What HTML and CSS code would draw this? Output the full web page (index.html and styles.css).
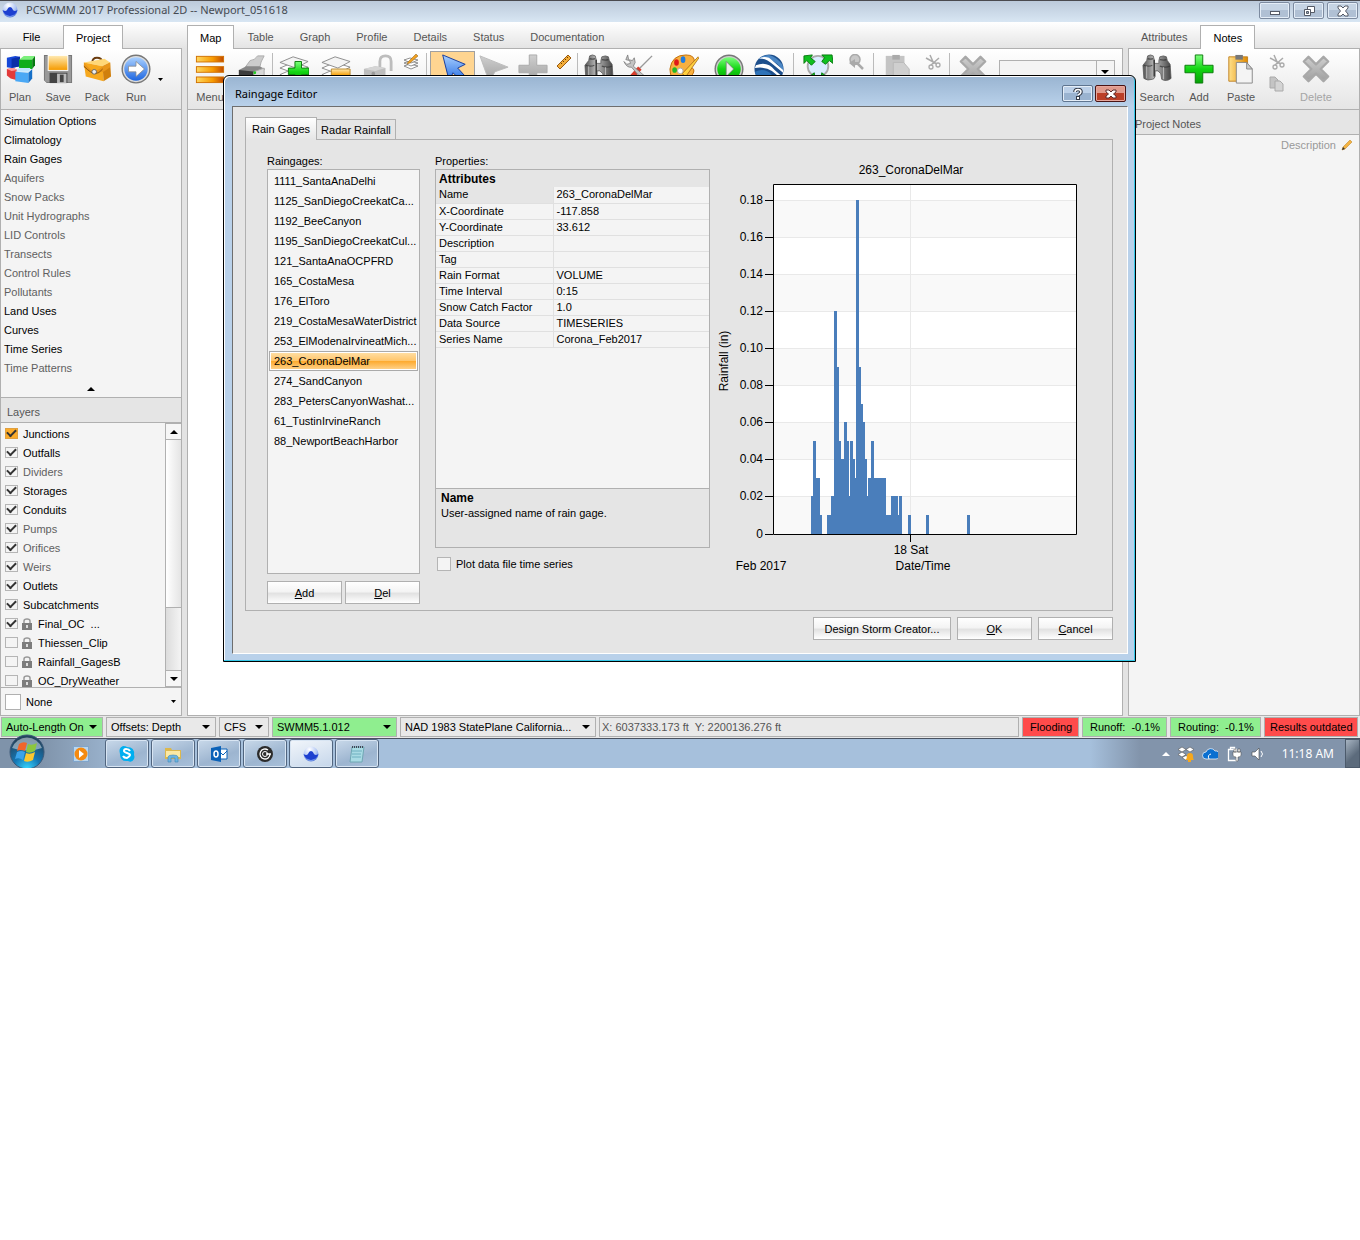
FILE: index.html
```html
<!DOCTYPE html>
<html lang="en">
<head>
<meta charset="utf-8">
<title>PCSWMM 2017 Professional 2D -- Newport_051618</title>
<link rel="stylesheet" href="styles.css">
</head>
<body>
<svg class="defs" width="0" height="0" aria-hidden="true">
  <defs>
    <linearGradient id="gold" x1="0" y1="0" x2="0" y2="1"><stop offset="0" stop-color="#ffe9b0"/><stop offset="1" stop-color="#f59b00"/></linearGradient>
    <linearGradient id="goldH" x1="0" y1="0" x2="1" y2="0"><stop offset="0" stop-color="#ffe08a"/><stop offset="1" stop-color="#e08a00"/></linearGradient>
    <linearGradient id="menubar" x1="0" y1="0" x2="1" y2="0"><stop offset="0" stop-color="#ffd860"/><stop offset=".6" stop-color="#f79a00"/><stop offset="1" stop-color="#c24a00"/></linearGradient>
    <linearGradient id="green" x1="0" y1="0" x2="0" y2="1"><stop offset="0" stop-color="#7dff7d"/><stop offset=".5" stop-color="#12d512"/><stop offset="1" stop-color="#07a007"/></linearGradient>
    <linearGradient id="steel" x1="0" y1="0" x2="1" y2="0"><stop offset="0" stop-color="#555"/><stop offset=".4" stop-color="#bbb"/><stop offset="1" stop-color="#444"/></linearGradient>
    <linearGradient id="grey" x1="0" y1="0" x2="0" y2="1"><stop offset="0" stop-color="#cfcfcf"/><stop offset="1" stop-color="#9e9e9e"/></linearGradient>
    <linearGradient id="blue" x1="0" y1="0" x2="0" y2="1"><stop offset="0" stop-color="#a9d0ff"/><stop offset="1" stop-color="#1e66e0"/></linearGradient>
    <radialGradient id="ball" cx=".4" cy=".2" r=".8"><stop offset="0" stop-color="#fff"/><stop offset=".6" stop-color="#b4c8f5"/><stop offset="1" stop-color="#5b80dd"/></radialGradient>
    <radialGradient id="orb" cx=".5" cy="1" r=".9"><stop offset="0" stop-color="#38d8ff"/><stop offset=".45" stop-color="#1577b5"/><stop offset="1" stop-color="#23445e"/></radialGradient>
    <symbol id="i-ball" viewBox="0 0 16 16"><circle cx="8" cy="8" r="7.500" fill="url(#ball)"/><path d="M.6 8q3 2 4.400 0Q6 5 8 5t3 3q1.500 2 4.400 0a7.500 7.500 0 0 1-14.800 0z" fill="#1d3fd0"/><path d="M3 12q5 4 10 0-5 5-10 0z" fill="#8fb0ff"/></symbol>
    <symbol id="i-plan" viewBox="0 0 32 32"><path d="M2 4l9-2 5 1v10l-9 2-5-1z" fill="#1648d8"/><path d="M7 5l9-2v10l-9 2z" fill="#0a2fa8"/><path d="M15 6l5-4h12l-3 4z" fill="#7bf07b"/><path d="M15 6h14v10H15z" fill="#0fae1c"/><path d="M29 6l3-4v10l-3 4z" fill="#067a10"/><path d="M2 16l7-1 4 2v11l-7-2-4-3z" fill="#e23a3a"/><path d="M2 16l7-1 4 2-6 1z" fill="#ff9d9d"/><path d="M11 19l4-4h12l-1 4z" fill="#bfe6ff"/><path d="M11 19l14 1v11l-14-2z" fill="#4aa8f5"/><path d="M25 20l4-4v10l-4 5z" fill="#1670c8"/></symbol>
    <symbol id="i-save" viewBox="0 0 32 32"><path d="M1 1h30v30H4l-3-3z" fill="#777"/><path d="M2 2h28v28H4l-2-2z" fill="#999"/><path d="M5 1h22v17H5z" fill="#fff"/><path d="M6 2h20v15H6z" fill="url(#gold)"/><path d="M7 20h19v11H7z" fill="#444"/><path d="M15 21h10v10H15z" fill="#bbb"/><path d="M18 22h4v8h-4z" fill="#444"/></symbol>
    <symbol id="i-pack" viewBox="0 0 32 32"><path d="M11 9q0-5 5-5t6 5" fill="none" stroke="#6a3c10" stroke-width="2"/><path d="M2 9l22-4 6 4-8 4z" fill="#ffd777"/><path d="M2 9l20 4 1 16-19-5z" fill="#f6a81e"/><path d="M22 13l8-4 1 15-8 5z" fill="#d07f0c"/><path d="M2 9q8 10 12 9t8-5l8-4v5l-7 5-10 1Q7 19 2 14z" fill="#e8951a"/><path d="M2 13q8 8 12 8t8-5" fill="none" stroke="#8a5208"/><circle cx="13" cy="19" r="2.500" fill="#eee" stroke="#666"/></symbol>
    <symbol id="i-run" viewBox="0 0 32 32"><circle cx="16" cy="16" r="15.500" fill="#777"/><circle cx="16" cy="16" r="14" fill="#ddd"/><circle cx="16" cy="16" r="12.500" fill="url(#blue)"/><path d="M8 13h8V8l9 8-9 8v-5H8z" fill="#fff" stroke="#888" stroke-width=".8"/></symbol>
    <symbol id="i-menu" viewBox="0 0 32 32"><g fill="url(#menubar)" stroke="#d07000"><rect x="1.500" y="2.500" width="29" height="6"/><rect x="1.500" y="13.500" width="29" height="6"/><rect x="1.500" y="24.500" width="29" height="6"/></g></symbol>
    <symbol id="i-print" viewBox="0 0 32 32"><path d="M10 14l5-7q5 0 8-5h7q-4 6-5 14z" fill="#ccc" stroke="#aaa"/><path d="M3 17l8-4h14l6 3-4 4H6z" fill="#888"/><path d="M3 17l18 2v10L3 27z" fill="#3c3c3c"/><path d="M19 19l11-4v9l-11 5z" fill="#d8d8d8" stroke="#aaa"/><circle cx="20" cy="20" r="1.500" fill="#2c2"/></symbol>
    <symbol id="i-stack" viewBox="0 0 32 32"><g fill="#fff" stroke="#8a8a8a"><path d="M1 22l14-6 16 5-13 7z"/><path d="M1 15l14-6 16 5-13 7z"/><path d="M1 9l14-6 16 5-13 7z" fill="#f4f4f4"/></g></symbol>
    <symbol id="i-plus" viewBox="0 0 32 32"><path d="M12 1h8v11h11v8H20v11h-8V20H1v-8h11z" fill="url(#green)" stroke="#0a7a0a"/></symbol>
    <symbol id="i-plusg" viewBox="0 0 32 32"><path d="M12 1h8v11h11v8H20v11h-8V20H1v-8h11z" fill="url(#grey)" stroke="#aaa"/></symbol>
    <symbol id="i-layeradd" viewBox="0 0 32 32"><use href="#i-stack"/><path d="M17 8h7v7h8v7h-8v8h-7v-8h-7v-7h7z" fill="url(#green)" stroke="#0a7a0a"/></symbol>
    <symbol id="i-layer" viewBox="0 0 32 32"><use href="#i-stack"/><path d="M11 16h20v7H11z" fill="url(#gold)" stroke="#b8862a"/></symbol>
    <symbol id="i-unlock" viewBox="0 0 32 32"><path d="M18 15V8q0-6 6-6t6 6v10" fill="none" stroke="#bdbdbd" stroke-width="3"/><path d="M1 16l12-3 11 2v14H1z" fill="#bdbdbd"/><path d="M1 16l12-3 11 2-11 3z" fill="#d5d5d5"/><circle cx="11" cy="21" r="2" fill="#999"/></symbol>
    <symbol id="i-layeredit" viewBox="0 0 16 16"><g fill="#fff" stroke="#777" stroke-width=".8"><path d="M1 12l6-2 8 2-7 3z"/><path d="M1 9l6-2 8 2-7 3z"/><path d="M1 6l6-2 8 2-7 3z"/></g><path d="M5 8l8-8 2 2-8 7-3 1z" fill="#f0a020" stroke="#8a5a10" stroke-width=".5"/></symbol>
    <symbol id="i-arrow" viewBox="0 0 32 32"><path d="M5 1l24 10-8 4 11 12-5 4-11-11-4 9z" fill="url(#blue)" stroke="#12389a"/></symbol>
    <symbol id="i-arrowg" viewBox="0 0 32 32"><path d="M1 2l30 12-14 5-6 11z" fill="url(#grey)" stroke="#bbb"/></symbol>
    <symbol id="i-ruler" viewBox="0 0 16 16"><path d="M1 12L12 1l3 3L4 15z" fill="#f3ad38" stroke="#9a5a10"/><path d="M5 9l1 1M7 7l1 1M9 5l1 1M11 3l1 1" stroke="#6a3a00"/></symbol>
    <symbol id="i-bino" viewBox="0 0 32 32"><path d="M6 2q3-2 6 0l1 4v4h5V7l1-4q4-2 7 0l1 4 3 4 1 15q-5 4-10 1l-1-6-3-3h-3v6q-1 3-3 3-5 2-9-1L1 12l4-5z" fill="url(#steel)" stroke="#555" stroke-width=".8"/><path d="M13 6v18" stroke="#333" stroke-width="1.500"/><path d="M6 5q3 1 6 0M19 6q4 1 7 0M2 12q5 2 9 0M19 13q6 2 11 0" fill="none" stroke="#333" stroke-width="1.300" opacity=".7"/><path d="M5 13v13M23 14v13" stroke="#ddd" opacity=".7"/></symbol>
    <symbol id="i-tools" viewBox="0 0 32 32"><path d="M31 2L17 16" stroke="#999" stroke-width="1.500"/><path d="M18 15L7 27" stroke="#d63c2c" stroke-width="5"/><path d="M5 1l1 5 4 1 2-3 1 5-2 4 15 13q1 5-3 4L9 14q-5 1-8-6l3 3 4-1-1-3-4-1z" fill="#c4c4c4" stroke="#777" stroke-width=".8"/></symbol>
    <symbol id="i-palette" viewBox="0 0 32 32"><path d="M1 16Q3 1 18 1q10 0 9 8l-4 5q6 2 2 8-5 9-14 8Q1 28 1 16z" fill="#f8b040" stroke="#c06a00"/><ellipse cx="8" cy="9" rx="2.500" ry="3.500" fill="#e01818"/><ellipse cx="15" cy="6" rx="2.500" ry="3.500" fill="#1f7be0"/><ellipse cx="6" cy="17" rx="2.500" ry="3" fill="#25b825"/><path d="M14 21L31 3l1 1L18 24z" fill="#ffd040" stroke="#a06010" stroke-width=".8"/><circle cx="12" cy="18" r="3" fill="#fff" stroke="#aaa"/></symbol>
    <symbol id="i-play" viewBox="0 0 32 32"><circle cx="16" cy="16" r="15.500" fill="#777"/><circle cx="16" cy="16" r="14" fill="#ccc"/><circle cx="16" cy="16" r="12.500" fill="url(#green)"/><path d="M13 8l8 8-8 8z" fill="#eee" stroke="#777" stroke-width=".8"/></symbol>
    <symbol id="i-earth" viewBox="0 0 32 32"><circle cx="16" cy="16" r="15.500" fill="#1d4f8c"/><path d="M5 5q5-4 11-4 8 2 14 10 2 5 1 8Q24 4 5 5z" fill="#4a86c4"/><path d="M5 5q8-1 15 6l11 9v-3Q22 9 16 4 10 2 5 5z" fill="#fff"/><path d="M2 12q12-5 20 5l8 7-2 3Q18 12 1 15z" fill="#fff"/><path d="M1 19q10-5 18 3l4 7Q10 35 3 25z" fill="#2f73b8"/></symbol>
    <symbol id="i-zoomfit" viewBox="0 0 32 32"><circle cx="16" cy="13" r="11" fill="#d9ecff" stroke="#aaa" stroke-width="2"/><g fill="#0fc01f" stroke="#06780f"><path d="M1 2l9-1-2 3 5 4-4 4-5-5-3 3z"/><path d="M31 1H20l3 3-3 4 4 3 4-4 4 3z"/><path d="M12 20l-5 4v6h6zM20 20l5 4v6h-6z"/></g></symbol>
    <symbol id="i-magg" viewBox="0 0 16 16"><circle cx="7" cy="5.500" r="5" fill="#c8c8c8" stroke="#aaa" stroke-width="1.500"/><path d="M1 9l6-4v3h4v3H7v3z" fill="#aaa"/><path d="M10 10l5 5" stroke="#aaa" stroke-width="2.500"/></symbol>
    <symbol id="i-pasteg" viewBox="0 0 32 32"><path d="M4 2h20v26H4z" fill="#c4c4c4"/><path d="M11 1h8v5h-8z" fill="#aaa"/><path d="M12 9h11l6 7v15H12z" fill="#cfcfcf" stroke="#b8b8b8"/></symbol>
    <symbol id="i-cut" viewBox="0 0 16 16"><path d="M5 1l4 9M1 4l11 6M14 4L6 11" stroke="#aaa" stroke-width="1.500"/><circle cx="6" cy="13" r="2" fill="none" stroke="#aaa" stroke-width="1.300"/><circle cx="13" cy="11" r="2" fill="none" stroke="#aaa" stroke-width="1.300"/></symbol>
    <symbol id="i-copy" viewBox="0 0 16 16"><path d="M1 1h5l3 3v8H1z" fill="#c4c4c4" stroke="#aaa"/><path d="M6 5h5l3 3v7H6z" fill="#d4d4d4" stroke="#aaa"/></symbol>
    <symbol id="i-x" viewBox="0 0 32 32"><path d="M8 3l8 8 8-8 5 5-8 8 8 8-5 5-8-8-8 8-5-5 8-8-8-8z" fill="url(#grey)" stroke="#a8a8a8" stroke-linejoin="round" stroke-width="2.500"/></symbol>
    <symbol id="i-paste" viewBox="0 0 32 32"><path d="M3 3h20v26H3z" fill="url(#goldH)" stroke="#c08020"/><path d="M10 1h8v5h-8z" fill="#777"/><path d="M11 9h11l6 7v15H11z" fill="#f4f4f4" stroke="#888"/><path d="M22 9v7h6z" fill="#ccc" stroke="#888"/></symbol>
    <symbol id="i-pencil" viewBox="0 0 12 12"><path d="M1 11l1-3 7-7 2 2-7 7z" fill="#f5b443" stroke="#c08a30" stroke-width=".6"/><path d="M1 11l1-3 2 2z" fill="#333"/></symbol>
    <symbol id="i-lock" viewBox="0 0 12 12"><path d="M3 6V3q0-2 3-2t3 2v3" fill="none" stroke="#999" stroke-width="1.500"/><path d="M1 5h10v7H1z" fill="#7c7c7c"/><path d="M5 7h2v3H5z" fill="#ddd"/></symbol>
    <symbol id="i-up" viewBox="0 0 8 4"><path d="M0 4l4-4 4 4z" fill="#000"/></symbol>
    <symbol id="i-down" viewBox="0 0 8 4"><path d="M0 0h8L4 4z" fill="#000"/></symbol>
  </defs>
</svg>

<div class="desktop">
<div class="app">
  <header class="titlebar">
    <svg class="s16"><use href="#i-ball"/></svg>
    <h1>PCSWMM 2017 Professional 2D -- Newport_051618</h1>
    <button class="winbtn" aria-label="Minimize"><svg width="12" height="12"><rect x="1.500" y="6.500" width="9" height="3" fill="#fff" stroke="#555a66"/></svg></button>
    <button class="winbtn" aria-label="Restore"><svg width="12" height="12"><path d="M4.500 1.500h7v6h-7z" fill="#fff" stroke="#555a66"/><path d="M1.500 4.500h6v6h-6z" fill="#fff" stroke="#555a66"/><path d="M3.500 6.500h2v2h-2z" fill="#a0adbf" stroke="#555a66"/></svg></button>
    <button class="winbtn" aria-label="Close"><svg width="12" height="12"><path d="M1 1h3l2 2 2-2h3v2L8.500 6 11 9v2H8L6 9l-2 2H1V9l2.500-3L1 3z" fill="#fff" stroke="#555a66"/></svg></button>
  </header>

  <div class="workspace">
    <aside class="col">
      <nav class="tabs"><button class="tab file">File</button><button class="tab on">Project</button></nav>
      <div class="toolbar left">
        <button class="tool w38"><svg class="s30"><use href="#i-plan"/></svg>Plan</button>
        <button class="tool w38"><svg class="s30"><use href="#i-save"/></svg>Save</button>
        <button class="tool w40"><svg class="s30"><use href="#i-pack"/></svg>Pack</button>
        <button class="tool w38"><svg class="s30"><use href="#i-run"/></svg>Run</button>
        <button class="tool more" aria-label="Run options"><svg width="5" height="3"><path d="M0 0h5L2.500 3z"/></svg></button>
      </div>
      <ul class="objects">
        <li>Simulation Options</li><li>Climatology</li><li>Rain Gages</li>
        <li class="dim">Aquifers</li><li class="dim">Snow Packs</li><li class="dim">Unit Hydrographs</li><li class="dim">LID Controls</li><li class="dim">Transects</li><li class="dim">Control Rules</li><li class="dim">Pollutants</li>
        <li>Land Uses</li><li>Curves</li><li>Time Series</li><li class="dim">Time Patterns</li>
        <li class="collapse"><svg width="8" height="4"><use href="#i-up"/></svg></li>
      </ul>
      <h2 class="panelhead">Layers</h2>
      <div class="layers">
        <div class="layerlist">
          <label class="hot"><input type="checkbox" checked>Junctions</label>
          <label><input type="checkbox" checked>Outfalls</label>
          <label class="dim"><input type="checkbox" checked>Dividers</label>
          <label><input type="checkbox" checked>Storages</label>
          <label><input type="checkbox" checked>Conduits</label>
          <label class="dim"><input type="checkbox" checked>Pumps</label>
          <label class="dim"><input type="checkbox" checked>Orifices</label>
          <label class="dim"><input type="checkbox" checked>Weirs</label>
          <label><input type="checkbox" checked>Outlets</label>
          <label><input type="checkbox" checked>Subcatchments</label>
          <label><input type="checkbox" checked><svg class="s12"><use href="#i-lock"/></svg>Final_OC&nbsp; ...</label>
          <label><input type="checkbox"><svg class="s12"><use href="#i-lock"/></svg>Thiessen_Clip</label>
          <label><input type="checkbox"><svg class="s12"><use href="#i-lock"/></svg>Rainfall_GagesB</label>
          <label><input type="checkbox"><svg class="s12"><use href="#i-lock"/></svg>OC_DryWeather</label>
        </div>
        <div class="scroll">
          <button aria-label="Scroll up"><svg width="8" height="4"><use href="#i-up"/></svg></button>
          <div class="thumb"></div>
          <button aria-label="Scroll down"><svg width="8" height="4"><use href="#i-down"/></svg></button>
        </div>
      </div>
      <div class="base"><span class="swatch"></span><select aria-label="Background layer"><option>None</option></select></div>
    </aside>

    <main class="col">
      <nav class="tabs"><button class="tab on">Map</button><button class="tab">Table</button><button class="tab">Graph</button><button class="tab">Profile</button><button class="tab">Details</button><button class="tab">Status</button><button class="tab">Documentation</button></nav>
      <div class="toolbar">
        <button class="tool w44"><svg class="s30"><use href="#i-menu"/></svg>Menu</button>
        <button class="tool w38" aria-label="Print"><svg class="s30"><use href="#i-print"/></svg></button>
        <span class="sep"></span>
        <button class="tool w40" aria-label="Add layer"><svg class="s30"><use href="#i-layeradd"/></svg></button>
        <button class="tool w44" aria-label="Remove layer"><svg class="s30"><use href="#i-layer"/></svg></button>
        <button class="tool w40" aria-label="Unlock"><svg class="s30"><use href="#i-unlock"/></svg></button>
        <button class="tool w26" aria-label="Edit layer"><svg class="s16"><use href="#i-layeredit"/></svg></button>
        <span class="sep"></span>
        <button class="tool picked" aria-label="Select"><svg class="s30"><use href="#i-arrow"/></svg></button>
        <button class="tool w38" aria-label="Edit vertices"><svg class="s30"><use href="#i-arrowg"/></svg></button>
        <button class="tool w40" aria-label="Add object"><svg class="s30"><use href="#i-plusg"/></svg></button>
        <button class="tool w22" aria-label="Measure"><svg class="s16"><use href="#i-ruler"/></svg></button>
        <span class="sep"></span>
        <button class="tool w40" aria-label="Find"><svg class="s30"><use href="#i-bino"/></svg></button>
        <button class="tool w38" aria-label="Tools"><svg class="s30"><use href="#i-tools"/></svg></button>
        <button class="tool w54" aria-label="Render"><svg class="s30"><use href="#i-palette"/></svg></button>
        <button class="tool w36" aria-label="Play"><svg class="s30"><use href="#i-play"/></svg></button>
        <button class="tool w44" aria-label="Globe"><svg class="s30"><use href="#i-earth"/></svg></button>
        <span class="sep"></span>
        <button class="tool w46" aria-label="Zoom extents"><svg class="s30"><use href="#i-zoomfit"/></svg></button>
        <button class="tool w30" aria-label="Zoom back"><svg class="s16"><use href="#i-magg"/></svg></button>
        <span class="sep"></span>
        <button class="tool w44" aria-label="Paste"><svg class="s30"><use href="#i-pasteg"/></svg></button>
        <button class="tool w28" aria-label="Cut"><svg class="s16"><use href="#i-cut"/></svg></button>
        <span class="sep"></span>
        <button class="tool w44" aria-label="Delete"><svg class="s30"><use href="#i-x"/></svg></button>
        <select class="combo" aria-label="Query"><option></option></select>
      </div>
      <div class="map"></div>
    </main>

    <aside class="col">
      <nav class="tabs"><button class="tab">Attributes</button><button class="tab on">Notes</button></nav>
      <div class="toolbar right">
        <button class="tool w42"><svg class="s30"><use href="#i-bino"/></svg>Search</button>
        <button class="tool w42"><svg class="s30"><use href="#i-plus"/></svg>Add</button>
        <button class="tool w42"><svg class="s30"><use href="#i-paste"/></svg>Paste</button>
        <span class="pair"><button aria-label="Cut"><svg class="s16"><use href="#i-cut"/></svg></button><button aria-label="Copy"><svg class="s16"><use href="#i-copy"/></svg></button></span>
        <button class="tool w44 off"><svg class="s30"><use href="#i-x"/></svg>Delete</button>
      </div>
      <h2 class="panelhead">Project Notes</h2>
      <div class="notesbody"><a href="#">Description<svg class="s12"><use href="#i-pencil"/></svg></a></div>
    </aside>
  </div>

  <footer class="status">
    <select class="cell ok len" aria-label="Auto-length"><option>Auto-Length On</option></select>
    <select class="cell offsets" aria-label="Offsets"><option>Offsets: Depth</option></select>
    <select class="cell unit" aria-label="Flow units"><option>CFS</option></select>
    <select class="cell ok engine" aria-label="Engine"><option>SWMM5.1.012</option></select>
    <select class="cell proj" aria-label="Projection"><option>NAD 1983 StatePlane California...</option></select>
    <span class="cell coords">X: 6037333.173 ft&nbsp; Y: 2200136.276 ft</span>
    <span class="cell bad flood">Flooding</span>
    <span class="cell ok runoff">Runoff:&nbsp; -0.1%</span>
    <span class="cell ok routing">Routing:&nbsp; -0.1%</span>
    <span class="cell bad outdated">Results outdated</span>
  </footer>
</div>

<nav class="taskbar">
  <button class="start" aria-label="Start"><svg width="38" height="36" viewBox="0 0 38 36"><circle cx="19" cy="18" r="17" fill="url(#orb)" stroke="#3a5878"/><path d="M4 14a16 16 0 0 1 30 0q-15 5-30 0z" fill="#fff" opacity=".45"/><path d="M11 10q4-3 8-1l-2 8q-4-2-8 0z" fill="#f0652a"/><path d="M20 10q4 2 9-1l-2 8q-5 3-9 1z" fill="#8cc63e"/><path d="M9 18q4-2 8 0l-2 8q-4-3-8-1z" fill="#3ba3ea"/><path d="M18 19q4 2 9-1l-2 8q-5 3-9 1z" fill="#fcc82e"/></svg></button>
  <button class="quick" aria-label="Media player"><svg width="16" height="16"><rect x=".5" y=".5" width="15" height="15" fill="#b9d6ef" stroke="#7fa5cc"/><circle cx="8" cy="8" r="6.500" fill="#f58a10"/><path d="M6 4l5 4-5 4z" fill="#fff"/></svg></button>
  <button class="task" aria-label="Skype"><svg width="18" height="18"><path d="M5 1q3 0 4 1 8 0 7 8 1 2 0 4-2 4-6 2-8 1-8-7Q0 3 5 1z" fill="#00aff0"/><path d="M12 6q-1-2-4-2-2 0-2 2 0 1 3 2t3 2-3 3q-3 0-4-2" fill="none" stroke="#fff" stroke-width="2"/></svg></button>
  <button class="task" aria-label="Explorer"><svg width="18" height="18"><path d="M1 3h6l1 2h9v9H1z" fill="#dcb84e"/><path d="M2 6h14v6H2z" fill="#fbe9a4"/><path d="M4 17v-5q0-2 5-2t5 2v5h-3v-4H7v4z" fill="#6db5e0" stroke="#3e88ba" stroke-width=".6"/></svg></button>
  <button class="task" aria-label="Outlook"><svg width="18" height="18"><path d="M9 4h8v10H9z" fill="#fff" stroke="#0b62b8"/><path d="M9 6l4 4 4-4" fill="none" stroke="#0b62b8"/><path d="M1 3l10-2v16L1 15z" fill="#0b62b8"/><ellipse cx="6" cy="9" rx="2" ry="3" fill="none" stroke="#fff" stroke-width="1.500"/></svg></button>
  <button class="task" aria-label="Citrix"><svg width="18" height="18"><circle cx="9" cy="9" r="8" fill="#2b2b2b"/><path d="M14 9a5 5 0 1 1-2-4M10 9h5" fill="none" stroke="#fff" stroke-width="1.300"/><circle cx="9" cy="9" r="2.500" fill="none" stroke="#fff"/></svg></button>
  <button class="task on" aria-label="PCSWMM"><svg class="s16"><use href="#i-ball"/></svg></button>
  <button class="task" aria-label="Notepad"><svg width="18" height="18"><path d="M4 2h12l-2 15H2z" fill="#a9dbe4" stroke="#6fa7b4"/><path d="M4 6h10M4 9h9M4 12h9" stroke="#6fb0c0"/><path d="M4 2h12" stroke="#445" stroke-dasharray="1 1" stroke-width="2"/></svg></button>
  <div class="tray">
    <svg width="8" height="5"><path d="M0 5l4-4 4 4z" fill="#fff"/></svg>
    <svg width="16" height="16"><path d="M4 1l4 2.500L4 6 0 3.500zM12 1l4 2.500L12 6 8 3.500zM4 6l4 2.500L4 11 0 8.500zM4 11.500l4-2 3 2-3 3z" fill="#fff" stroke="#555" stroke-width=".6"/><path d="M7 14q2-1 2-4t3-3 3 3 1 4zM10 14h3v2h-3z" fill="#f7a81c"/></svg>
    <svg width="16" height="16"><path d="M4 13a3.500 3.500 0 0 1 0-7 5 5 0 0 1 9-1 4 4 0 0 1 1 8z" fill="#0a6fd0" stroke="#fff" stroke-width=".7"/><path d="M7 13q-2-4 2-5" fill="none" stroke="#fff"/></svg>
    <svg width="16" height="16"><path d="M2.500 3.500h8v11h-8zM4.500 1.500h4v2h-4z" fill="#8294ab" stroke="#fff" stroke-width="1.300"/><path d="M7 6h8v3q0 2-3 2v4h-2v-4q-3 0-3-2zM8 3h2v3H8zM12 3h2v3h-2z" fill="#fff" stroke="#444" stroke-width=".5"/></svg>
    <svg width="16" height="16"><path d="M2 6h3l4-4v12l-4-4H2z" fill="#fff" stroke="#444" stroke-width=".6"/><path d="M11 5q3 3 0 6" fill="none" stroke="#fff"/></svg>
    <time>11:18 AM</time>
    <button class="peek" aria-label="Show desktop"></button>
  </div>
</nav>

<section class="dialog" role="dialog" aria-labelledby="dlg-title">
  <header class="dlghead">
    <h2 id="dlg-title">Raingage Editor</h2>
    <button class="winbtn help" aria-label="Help"><svg width="12" height="12"><path d="M3 4q0-2.500 3-2.500T9 4q0 1.500-3 3" fill="none" stroke="#333a48" stroke-width="3.500"/><path d="M4 8h4v4H4z" fill="#333a48"/><path d="M3 4q0-2.500 3-2.500T9 4q0 1.500-3 3" fill="none" stroke="#fff" stroke-width="1.500"/><path d="M5 9h2v2H5z" fill="#fff"/></svg></button>
    <button class="winbtn close" aria-label="Close"><svg width="12" height="12"><path d="M1 2h3l2 2 2-2h3v2L8.500 6 11 8v2H8L6 8l-2 2H1V8l2.500-2L1 4z" fill="#fff" stroke="#5b2a2a"/></svg></button>
  </header>
  <div class="client">
    <div class="dlgtabs"><button class="dtab on">Rain Gages</button><button class="dtab">Radar Rainfall</button></div>
    <div class="page">
      <div class="gages">
        <h3>Raingages:</h3>
        <ul class="gagelist" role="listbox" aria-label="Raingages">
          <li>1111_SantaAnaDelhi</li><li>1125_SanDiegoCreekatCa...</li><li>1192_BeeCanyon</li><li>1195_SanDiegoCreekatCul...</li><li>121_SantaAnaOCPFRD</li><li>165_CostaMesa</li><li>176_ElToro</li><li>219_CostaMesaWaterDistrict</li><li>253_ElModenaIrvineatMich...</li><li class="sel">263_CoronaDelMar</li><li>274_SandCanyon</li><li>283_PetersCanyonWashat...</li><li>61_TustinIrvineRanch</li><li>88_NewportBeachHarbor</li>
        </ul>
        <div class="pairbtns"><button class="btn"><u>A</u>dd</button><button class="btn"><u>D</u>el</button></div>
      </div>
      <div class="props">
        <h3>Properties:</h3>
        <div class="propbox">
          <table>
            <colgroup><col class="keys"><col></colgroup>
            <thead><tr><th colspan="2">Attributes</th></tr></thead>
            <tbody>
              <tr class="cur"><td>Name</td><td>263_CoronaDelMar</td></tr>
              <tr><td>X-Coordinate</td><td>-117.858</td></tr>
              <tr><td>Y-Coordinate</td><td>33.612</td></tr>
              <tr><td>Description</td><td></td></tr>
              <tr><td>Tag</td><td></td></tr>
              <tr><td>Rain Format</td><td>VOLUME</td></tr>
              <tr><td>Time Interval</td><td>0:15</td></tr>
              <tr><td>Snow Catch Factor</td><td>1.0</td></tr>
              <tr><td>Data Source</td><td>TIMESERIES</td></tr>
              <tr><td>Series Name</td><td>Corona_Feb2017</td></tr>
            </tbody>
          </table>
          <div class="hint"><b>Name</b><p>User-assigned name of rain gage.</p></div>
        </div>
        <label class="plot"><input type="checkbox">Plot data file time series</label>
      </div>
      <svg class="chart" width="375" height="430" viewBox="710 153 375 430" role="img" aria-label="Rainfall for 263_CoronaDelMar">
        <rect x="773" y="184" width="304" height="350" fill="#fff"/>
        <path d="M774 200h302v37H774zM774 274h302v37H774zM774 348h302v37H774zM774 422h302v37H774zM774 496h302v38H774z" fill="#f9f9f9"/>
        <path d="M774 200.500h302m-302 37h302m-302 37h302m-302 37h302m-302 37h302m-302 37h302m-302 37h302m-302 37h302m-302 37h302M910.500 185v349" stroke="#e9e9e9"/>
        <path fill="#4a7ebb" d="M811 534V496h2V441h3V478h4V515h2V534zM827 534V515h4V496h3V311h3V367h2V441h2V459h3V422h3V441h2V496h1V441h3V459h2V478h1V200h3V367h2V404h2V422h2V459h2V496h1V478h3V441h3V478h12V515h5V496h7V515h1V496h3V534zM908 534V515h3V534zM926 534V515h3V534zM967 534V515h3V534z"/>
        <path d="M773.500 184.500h303v350h-303zM765 200.500h8m-8 37h8m-8 37h8m-8 37h8m-8 37h8m-8 37h8m-8 37h8m-8 37h8m-8 37h8m-8 38h8M910.500 534v8" fill="none" stroke="#000"/>
        <g text-anchor="end"><text x="763" y="204">0.18</text><text x="763" y="241">0.16</text><text x="763" y="278">0.14</text><text x="763" y="315">0.12</text><text x="763" y="352">0.10</text><text x="763" y="389">0.08</text><text x="763" y="426">0.06</text><text x="763" y="463">0.04</text><text x="763" y="500">0.02</text><text x="763" y="538">0</text></g>
        <g text-anchor="middle"><text x="911" y="174">263_CoronaDelMar</text><text x="911" y="554">18 Sat</text><text x="923" y="570">Date/Time</text><text x="761" y="570">Feb 2017</text><text transform="translate(728 361) rotate(-90)">Rainfall (in)</text></g>
      </svg>
    </div>
    <div class="actions"><button class="btn wide">Design Storm Creator...</button><button class="btn"><u>O</u>K</button><button class="btn"><u>C</u>ancel</button></div>
  </div>
</section>
</div>
</body>
</html>
```
FILE: styles.css
```css
* { box-sizing: border-box; }
body { margin: 0; background: #fff; color: #000; font: 11px/16px "Liberation Sans", Arial, sans-serif; }
h1, h2, h3, p, ul { margin: 0; padding: 0; font: inherit; }
ul { list-style: none; }
button, select, input { font: inherit; color: inherit; margin: 0; }
button { background: none; border: 0; padding: 0; cursor: default; white-space: nowrap; }
svg { display: block; flex: none; }
.defs { position: absolute; }
.s12 { width: 12px; height: 12px; }
.s16 { width: 16px; height: 16px; }
.s30 { width: 30px; height: 30px; }
.desktop { position: relative; }
.app { display: flex; flex-direction: column; background: #e3e3e3; }

.titlebar { display: flex; align-items: flex-start; gap: 3px; height: 22px; padding: 1px 2px; border-top: 1px solid #4a4a4f; background: linear-gradient(#bccadb, #d8e6f3); }
.titlebar h1 { flex: 1; padding-left: 5px; color: #454a52; font: 11px/16px "Noto Sans", sans-serif; }
.winbtn { display: flex; align-items: center; justify-content: center; width: 31px; height: 17px; border: 1px solid #7d8ba0; border-radius: 2px; box-shadow: inset 0 0 0 1px #e4edf7; background: linear-gradient(#c6d4e4 50%, #b0c0d4 50%); }

.workspace { display: grid; grid-template-columns: 182px 1fr 232px; gap: 5px; background: linear-gradient(#fff, #e3e3e3 27px); }
.col { display: flex; flex-direction: column; min-width: 0; }
.tabs { display: flex; align-items: stretch; height: 27px; padding-top: 3px; border-bottom: 1px solid #b0b0b0; color: #555; }
.tab { padding: 0 13px; }
.tab.file { width: 63px; color: #000; }
.tab.on { height: 24px; padding: 0 12px; border: 1px solid #b0b0b0; border-bottom: 0; background: #fff; color: #000; }
.toolbar { display: flex; align-items: flex-start; height: 61px; border: 1px solid #b0b0b0; border-top: 0; background: linear-gradient(#fff, #e5e5e5); color: #555; overflow: hidden; }
.tool { display: flex; flex-direction: column; align-items: center; gap: 5px; padding-top: 5px; flex: none; }
.w22 { width: 22px; } .w26 { width: 26px; } .w28 { width: 28px; } .w30 { width: 30px; } .w36 { width: 36px; }
.w38 { width: 38px; } .w40 { width: 40px; } .w42 { width: 42px; } .w44 { width: 44px; } .w46 { width: 46px; } .w54 { width: 54px; }
.more { padding: 29px 3px; }
.tool.off { color: #a5a5a5; }
.sep { width: 4px; height: 32px; margin-top: 4px; background: linear-gradient(#bbb, #bbb) center / 1px 100% no-repeat; flex: none; }
.picked { width: 45px; height: 50px; margin: 2px 0 0 2px; padding-top: 2px; border: 1px solid #a0a0a0; background: #ffd591; }
.toolbar.right { padding-left: 7px; }
.pair { display: flex; flex-direction: column; gap: 6px; width: 32px; padding: 5px 7px; }
.combo { width: 116px; height: 22px; margin: 11px 0 0 4px; padding: 0 4px; border: 1px solid #b0b0b0; }
select { appearance: none; border-radius: 0; background: #f4f4f4 url("data:image/svg+xml,%3Csvg xmlns='http://www.w3.org/2000/svg' width='8' height='4'%3E%3Cpath d='M0 0h8L4 4z'/%3E%3C/svg%3E") right 5px center no-repeat; }
.toolbar .combo { background: url("data:image/svg+xml,%3Csvg xmlns='http://www.w3.org/2000/svg' width='18' height='20'%3E%3Cpath d='M0 0h1v20H0z' fill='%23b0b0b0'/%3E%3Cpath d='M5 9h8l-4 4z'/%3E%3C/svg%3E") right center no-repeat #f4f4f4; }

.objects { padding: 2px 3px; border: solid #b0b0b0; border-width: 0 1px 1px; background: #f4f4f4; }
.objects li { height: 19px; line-height: 19px; }
.dim { color: #606060; }
.objects .collapse { display: flex; align-items: center; justify-content: center; height: 17px; padding-top: 5px; }
.panelhead { height: 25px; padding: 6px 6px 0; border: solid #b0b0b0; border-width: 0 1px 1px; background: #e5e5e5; color: #555; }
.layers { display: flex; height: 264px; border: solid #b0b0b0; border-width: 0 1px; background: #f4f4f4; }
.layerlist { flex: 1; padding: 1px 4px 0; overflow: hidden; }
.layerlist label { display: flex; align-items: center; gap: 5px; height: 19px; white-space: nowrap; }
.layerlist label:has(svg) { gap: 3px; }
.layerlist svg { margin-right: 2px; }
input[type=checkbox] { appearance: none; display: grid; place-items: center; width: 13px; height: 11px; border: 1px solid #b5b5b5; background: #f4f4f4; flex: none; }
input[type=checkbox]:checked::before { content: ""; width: 7px; height: 4px; margin-bottom: 3px; border: solid #333; border-width: 0 0 2px 2px; transform: rotate(-45deg); }
.hot input[type=checkbox] { background: #fbab2a; border-color: #e0a040; }
.scroll { display: flex; flex-direction: column; width: 16px; border-left: 1px solid #b0b0b0; background: linear-gradient(90deg, #dcdcdc, #f4f4f4); }
.scroll button { display: flex; align-items: center; justify-content: center; height: 17px; border: solid #b0b0b0; border-width: 1px 0; background: #f6f6f6; }
.thumb { height: 168px; border-bottom: 1px solid #b0b0b0; background: linear-gradient(90deg, #fff, #e4e4e4); margin-bottom: auto; }
.base { display: flex; align-items: center; gap: 1px; height: 29px; padding: 0 4px; border: 1px solid #b0b0b0; background: #f4f4f4; }
.swatch { width: 16px; height: 16px; border: 1px solid #b0b0b0; background: #fff; }
.base select { flex: 1; border: 0; background-size: 5px 3px; background-position: right 1px center; padding: 0 4px; }
.map { flex: 1; border: solid #b0b0b0; border-width: 0 1px 1px; background: #fff; }
.notesbody { flex: 1; display: flex; justify-content: flex-end; align-items: flex-start; padding: 2px 6px; border: solid #b0b0b0; border-width: 0 1px 1px; background: #f4f4f4; }
.notesbody a { display: flex; align-items: center; gap: 5px; color: #999; text-decoration: none; }

.status { display: flex; gap: 3px; height: 22px; padding: 1px 2px 1px 1px; background: #e8e8e8; }
.cell { height: 20px; padding: 0 4px; border: 1px solid #b0b0b0; background-color: #e9e9e9; line-height: 18px; white-space: nowrap; flex: none; }
.cell.ok { background-color: #8fee8f; }
.cell.bad { background-color: #ff4b4b; }
.len { width: 102px; } .offsets { width: 110px; } .unit { width: 50px; } .engine { width: 125px; } .proj { width: 196px; }
.coords { flex: 1; padding: 0 2px; color: #555; }
.flood { width: 57px; padding: 0 7px; } .runoff { width: 85px; padding: 0 7px; } .routing { width: 91px; padding: 0 7px; } .outdated { width: 94px; padding: 0 5px; text-align: right; }

.taskbar { display: flex; align-items: center; gap: 2px; height: 30px; border-top: 1px solid #4a5260; background: linear-gradient(90deg, #7f93aa 40px, #a6c0dc 140px, #a6c0dc calc(100% - 270px), #8294ab calc(100% - 220px)); }
.start { width: 38px; height: 36px; margin: -4px 25px 0 8px; }
.quick { margin-right: 14px; }
.task { display: flex; align-items: center; justify-content: center; width: 44px; height: 29px; border: 1px solid #51657f; border-radius: 3px; box-shadow: inset 0 0 0 1px #d8e5f3; background: linear-gradient(160deg, #c9d9ea, #9db5d0 60%, #a8c0da); }
.task.on { background: linear-gradient(160deg, #f2f6fb, #c5d6ea); }
.tray { display: flex; align-items: center; gap: 8px; margin-left: auto; color: #fff; font: 12px/16px "Noto Sans", sans-serif; }
.tray time { padding: 0 3px 0 8px; }
.peek { width: 15px; height: 29px; border: 1px solid #4c5a6b; background: linear-gradient(135deg, #a7b4c2, #5c6b7c 60%); }

.dialog { position: absolute; top: 75px; left: 223px; right: 224px; padding: 0 7px 7px 8px; border: 1px solid #000; border-radius: 6px 6px 0 0; box-shadow: inset -1px -1px 0 #35c8e8, inset 1px 1px 0 #fff; background: linear-gradient(#99b4d1, #b9d1ea 30px); }
.dlghead { display: flex; align-items: center; gap: 2px; height: 30px; padding: 5px 2px 0 3px; }
.dlghead h2 { flex: 1; font: 11px/16px "Noto Sans", sans-serif; }
.help { border-color: #5f7590; background: linear-gradient(#bcd0e8 50%, #9ab3d0 50%); }
.close { border-color: #4a1414; box-shadow: inset 0 0 0 1px #e7a79d; background: linear-gradient(#e09a8c 50%, #bb3f28 50%); }
.client { border: 1px solid; border-color: #6e6e6e #fff #fff #6e6e6e; background: #e5e5e5; padding: 10px 14px 13px 12px; }
.dlgtabs { display: flex; align-items: flex-end; height: 22px; }
.dtab { height: 20px; padding: 0 4px; border: 1px solid #b0b0b0; border-width: 1px 1px 0 0; background: #e5e5e5; }
.dtab.on { height: 23px; margin-bottom: -1px; padding: 0 6px; border-left-width: 1px; background: linear-gradient(#fff, #e5e5e5); z-index: 1; }
.page { display: flex; height: 472px; padding: 13px 21px 6px; border: 1px solid #b0b0b0; }
.gages { display: flex; flex-direction: column; width: 153px; }
.gagelist { height: 405px; padding: 1px; border: 1px solid #b0b0b0; background: #f4f4f4; }
.gagelist li { height: 20px; padding: 0 4px; border: 1px solid transparent; line-height: 18px; white-space: nowrap; }
.gagelist .sel { border-color: #aaa; box-shadow: inset 0 0 0 1px #fff; background: linear-gradient(#ffe0a8, #ffc56a 50%, #fda92c 50%, #ffd591); }
.pairbtns { display: flex; gap: 3px; margin-top: 7px; }
.btn { flex: none; width: 75px; height: 23px; border: 1px solid #b0b0b0; background: linear-gradient(#fff, #f4f4f4 45%, #e2e2e2 55%, #fff); }
.gages .btn { flex: 1; width: auto; }
.btn.wide { width: 138px; }
.props { width: 275px; margin-left: 15px; }
.propbox { display: flex; flex-direction: column; height: 379px; border: 1px solid #b0b0b0; background: #f4f4f4; }
.propbox table { width: 100%; border-collapse: collapse; table-layout: fixed; }
.keys { width: 117px; }
.propbox th { height: 17px; padding: 1px 3px 0; background: #e5e5e5; font-size: 12px; text-align: left; }
.propbox td { height: 16px; padding: 0 3px; border-bottom: 1px solid #e0e0e0; line-height: 15px; white-space: nowrap; }
.propbox td:first-child { border-right: 1px solid #e0e0e0; }
.propbox .cur td:first-child { background: #e5e5e5; }
.hint { height: 59px; margin-top: auto; padding: 2px 5px; border-top: 1px solid #b0b0b0; background: #e5e5e5; line-height: 15px; }
.hint b { font-size: 12px; }
.plot { display: flex; align-items: center; gap: 5px; margin: 8px 2px; }
.plot input[type=checkbox] { width: 14px; height: 14px; }
.chart { font: 12px "Liberation Sans", Arial, sans-serif; }
.actions { display: flex; justify-content: flex-end; gap: 6px; padding-top: 6px; }
```
